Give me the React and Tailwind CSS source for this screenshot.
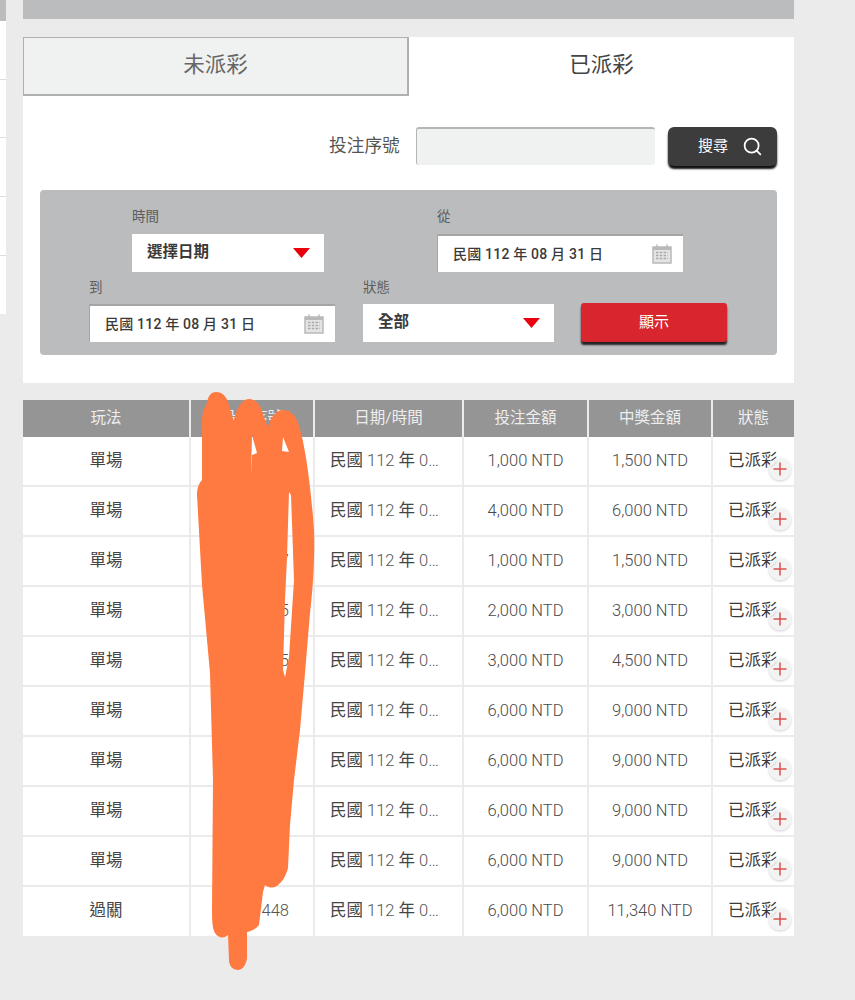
import React from 'react';
import { Search } from 'lucide-react';

const rows = [
    { play: '單場', tail: '', bet: '1,000 NTD', win: '1,500 NTD' },
    { play: '單場', tail: '', bet: '4,000 NTD', win: '6,000 NTD' },
    { play: '單場', tail: '7', bet: '1,000 NTD', win: '1,500 NTD' },
    { play: '單場', tail: '5', bet: '2,000 NTD', win: '3,000 NTD' },
    { play: '單場', tail: '5', bet: '3,000 NTD', win: '4,500 NTD' },
    { play: '單場', tail: '', bet: '6,000 NTD', win: '9,000 NTD' },
    { play: '單場', tail: '', bet: '6,000 NTD', win: '9,000 NTD' },
    { play: '單場', tail: '', bet: '6,000 NTD', win: '9,000 NTD' },
    { play: '單場', tail: '', bet: '6,000 NTD', win: '9,000 NTD' },
    { play: '過關', tail: '448', bet: '6,000 NTD', win: '11,340 NTD' },
];

const headers = ['玩法', '投注序號', '日期/時間', '投注金額', '中獎金額', '狀態'];

const Caret = () => (
    <svg width="17" height="10" viewBox="0 0 17 10" className="shrink-0">
        <path d="M0 0H17L8.5 10Z" fill="#e8000f" />
    </svg>
);

const CalendarIcon = () => (
    <svg width="20" height="20" viewBox="0 0 20 20" className="shrink-0" fill="none">
        <path d="M1 3H19V19H1Z" fill="#e4e4e4" stroke="#b9b9b9" strokeWidth="1.5" />
        <path d="M1 3H19V6H1Z" fill="#b9b9b9" />
        <path d="M5 0.5V4M15 0.5V4" stroke="#b9b9b9" strokeWidth="1.5" />
        <path d="M4 8.5H16M4 11.5H16M4 14.5H16" stroke="#a8a8a8" strokeWidth="1.6" strokeDasharray="2.4 1.4" />
    </svg>
);

const DateField = ({ className }) => (
    <div className={`flex items-center justify-between bg-white border-t-2 border-l border-[#a5a5a5] pl-[15px] pr-[11px] text-[14px] font-medium text-[#3a3a3a] tracking-[0.2px] ${className}`}>
        <span>民國 112 年 08 月 31 日</span>
        <CalendarIcon />
    </div>
);

const SelectField = ({ label, className }) => (
    <div className={`flex items-center justify-between bg-white pl-[15px] pr-[14px] text-[15.5px] font-bold text-[#3a3a3a] ${className}`}>
        <span>{label}</span>
        <Caret />
    </div>
);

const Label = ({ children, className = 'mb-2' }) => <div className={`h-[18px] text-[13.5px] leading-[18px] text-[#5c5c5c] ${className}`}>{children}</div>;

const Scribble = () => (
    <svg className="absolute inset-0 pointer-events-none" width="855" height="1000" viewBox="0 0 855 1000">
        <path
            fill="#ff7a41"
            fillRule="evenodd"
            d="M207 403C208 395 212 392 216 392C222 392 226 396 228 402L234 422C235 412 241 399 249 399C256 399 261 406 263 414L268 428C270 418 276 410 283 410C291 410 296 416 299 426C305 444 311 486 314 530C315 555 313 590 310 613L305 673L300 730L294 780L290 825L288 868C286 876 282 882 279 884C276 888 270 889 265 885L263 892L259 925C256 929 251 931 247 932L247 958C246 966 242 970 238 970C233 970 229 966 229 960L228 935C224 939 218 938 215 933C212 928 212 918 212 908L213 780L210 673L202 585L197 495C197 488 199 483 202 480L202 422C202 414 204 408 207 403Z
            M252 435L257 453L252 455L251 475Z
            M283 437L289 452L282 451Z
            M289 492L291 495L294 580L289 657L285 677L283 670L285 600L287 558Z"
        />
    </svg>
);

export default function App() {
    return (
        <div className="relative flex w-[855px] h-[1000px] overflow-hidden bg-[#ebebeb] [font-family:Roboto,'Noto_Sans_CJK_TC',sans-serif]">
            {/* left edge of the sidebar */}
            <div className="w-[6px] h-[314px] shrink-0 bg-white">
                <div className="h-[21px] bg-[#bbbcbe]" />
                <div className="h-[59px] border-b border-[#ddd]" />
                <div className="h-[58px] border-b border-[#ddd]" />
                <div className="h-[59px] border-b border-[#ddd]" />
                <div className="h-[59px] border-b border-[#ddd]" />
            </div>

            <div className="w-[771px] ml-[17px] shrink-0">
                <div className="h-[19px] bg-[#bbbcbe]" />

                <div className="mt-[18px] h-[346px] bg-white">
                    <div className="flex h-[59px]">
                        <div className="flex w-[386px] items-center justify-center pb-[2px] bg-[#f0f1f1] border border-[#b0b0b0] border-r-2 border-b-2 text-[21.5px] text-[#666]">未派彩</div>
                        <div className="flex flex-1 items-center justify-center pb-[2px] text-[21.5px] text-[#444]">已派彩</div>
                    </div>

                    <div className="flex items-start mt-[31px] pl-[306px]">
                        <div className="mt-[6px] text-[17.7px] leading-[27px] text-[#555] w-[87px]">投注序號</div>
                        <div className="w-[239px] h-[38px] bg-[#f0f2f2] border-t-2 border-l border-[#b5b5b5] rounded-[3px]" />
                        <button className="flex items-center justify-end gap-[14px] w-[109px] h-[39px] ml-[13px] pr-[14px] rounded-md bg-[#3c3c3c] text-[15px] text-white shadow-[0_3px_2px_#111]">
                            <span>搜尋</span>
                            <Search size={21} strokeWidth={2} />
                        </button>
                    </div>

                    <div className="mt-[24px] ml-[17px] w-[737px] h-[165px] bg-[#bbbcbe] rounded-[4px] pt-[17px]">
                        <div className="flex pl-[92px]">
                            <div className="w-[192px]">
                                <Label className="mb-[9px]">時間</Label>
                                <SelectField label="選擇日期" className="h-[38px]" />
                            </div>
                            <div className="w-[246px] ml-[113px]">
                                <Label className="mb-[9px]">從</Label>
                                <DateField className="h-[38px]" />
                            </div>
                        </div>
                        <div className="flex items-end mt-[6px] pl-[49px]">
                            <div className="w-[246px]">
                                <Label>到</Label>
                                <DateField className="h-[38px]" />
                            </div>
                            <div className="w-[191px] ml-[28px]">
                                <Label>狀態</Label>
                                <SelectField label="全部" className="h-[38px]" />
                            </div>
                            <button className="w-[146px] h-[39px] ml-[27px] rounded-[3px] bg-[#d9262e] text-[15px] text-white shadow-[0_3px_2px_#222]">顯示</button>
                        </div>
                    </div>
                </div>

                <div className="mt-[17px] grid grid-cols-[166px_122px_147px_123px_122px_81px] gap-x-[2px] h-[37px]">
                    {headers.map((h) => (
                        <div key={h} className="flex items-center justify-center bg-[#959595] text-[15.5px] text-[#eee]">{h}</div>
                    ))}
                </div>
                <div className="grid grid-cols-[166px_122px_147px_123px_122px_81px] grid-rows-[repeat(9,48px)_49px] gap-[2px] text-[16.5px]">
                    {rows.map((r, i) => (
                        <React.Fragment key={i}>
                            <div className="flex items-center justify-center bg-white text-[#444]">{r.play}</div>
                            <div className="flex items-center justify-end bg-white pr-[24px] text-[#555] font-light">{r.tail}</div>
                            <div className="flex items-center pl-[15px] bg-white text-[#555] font-light whitespace-pre">
                                <span className="font-normal text-[#444]">民國</span> 112 <span className="font-normal text-[#444]">年</span> 0…
                            </div>
                            <div className="flex items-center justify-center bg-white text-[#4a4a4a] font-light">{r.bet}</div>
                            <div className="flex items-center justify-center bg-white text-[#4a4a4a] font-light">{r.win}</div>
                            <div className="relative flex items-center bg-white pl-[15px] text-[#3a3a3a] whitespace-nowrap">
                                已派彩
                                <div className="absolute left-[56px] top-[21px] flex w-[22px] h-[22px] items-center justify-center rounded-full bg-[#f2f2f2]/90 shadow-[0_1px_3px_rgba(0,0,0,0.2)]">
                                    <svg width="14" height="14" viewBox="0 0 14 14">
                                        <path d="M7 0.5V13.5M0.5 7H13.5" stroke="#d9534f" strokeWidth="1.5" />
                                    </svg>
                                </div>
                            </div>
                        </React.Fragment>
                    ))}
                </div>
            </div>

            <Scribble />
        </div>
    );
}
